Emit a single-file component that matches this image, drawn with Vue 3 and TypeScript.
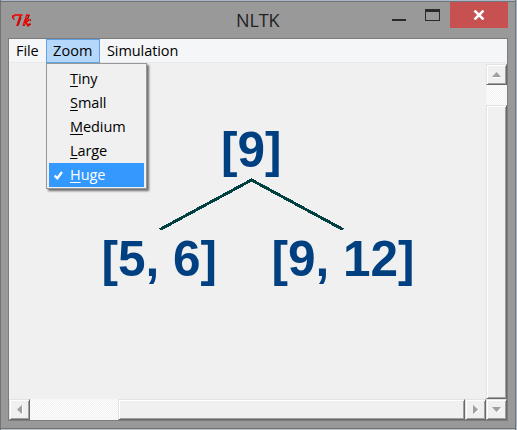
<script setup lang="ts">
import { ref } from 'vue'

const menus: string[] = ['File', 'Zoom', 'Simulation']
const sizes: string[] = ['Tiny', 'Small', 'Medium', 'Large', 'Huge']
const open = ref('Zoom')
const selected = ref('Huge')
</script>

<template>
  <div class="window">
    <header class="titlebar">
      <svg class="tk" width="20" height="14" viewBox="0 0 20 14" fill="none" stroke="#f00000">
        <path d="M.8 4.500 V2 H2 L3 1 H10.500" stroke-width="1.700" />
        <path d="M8.500 1.500 L5 12" stroke-width="1.800" />
        <path d="M9.300 3 L6.200 11.500 M1 5 H3" stroke="#800" stroke-width=".8" />
        <path d="M14.500 1.500 L11 12 M14 1 H16.500 L16 4 L12 8" stroke-width="1.300" />
        <path d="M12.500 9 L17.500 5.500 M13.800 8.500 L16 11.500 L18.500 9.500" stroke-width="1.900" />
        <path d="M17.500 1 L15.500 5 M18.500 5 V7 M18.500 10 L16 12.500 M12.200 12 L13 10" stroke="#800" stroke-width=".8" />
      </svg>
      <span class="title">NLTK</span>
      <div class="controls">
        <span class="min"></span>
        <span class="max"></span>
        <button class="close" aria-label="Close">
          <svg width="12" height="10" viewBox="0 0 12 10"><path d="M1.500 .5 L10.500 9.500 M10.500 .5 L1.500 9.500" stroke="#fff" stroke-width="2.500" /></svg>
        </button>
      </div>
    </header>
    <main class="client">
      <nav class="menubar">
        <div v-for="m in menus" :key="m" class="menu" :class="{ active: m === open }" @click="open = m">
          <span>{{ m }}</span>
        </div>
      </nav>
      <div class="view">
        <svg class="tree" width="477" height="335" viewBox="9 64 477 335">
          <path d="M160 229.500 L251.500 180 L343 229.500" fill="none" stroke="#004040" stroke-width="3" shape-rendering="crispEdges" />
          <g text-anchor="middle">
            <text x="251.200" y="167">[9]</text>
            <text x="159.200" y="276">[5, 6]</text>
            <text x="343" y="276">[9, 12]</text>
          </g>
        </svg>
        <div class="vbar">
          <span class="btn"><svg width="10" height="6" viewBox="0 0 10 6"><path d="M1 5.500 H10" stroke="#fff" fill="none" /><path d="M0 5 L4.500 0 L9 5Z" /></svg></span>
          <span class="track-y"></span>
          <span class="thumb"></span>
        </div>
        <div class="hbar">
          <span class="btn"><svg width="6" height="10" viewBox="0 0 6 10"><path d="M5.500 1 V10" stroke="#fff" /><path d="M5 0 L0 4.500 L5 9Z" /></svg></span>
          <span class="track-x"></span>
          <span class="thumb"></span>
          <span class="btn"><svg width="6" height="10" viewBox="0 0 6 10"><path d="M1 10 L6 5" stroke="#fff" /><path d="M0 0 L5 4.500 L0 9Z" /></svg></span>
        </div>
        <span class="btn"><svg width="10" height="6" viewBox="0 0 10 6"><path d="M5 6 L10 1" stroke="#fff" /><path d="M0 0 L4.500 5 L9 0Z" /></svg></span>
      </div>
    </main>
    <div v-if="open === 'Zoom'" class="dropdown">
      <div v-for="s in sizes" :key="s" class="item" :class="{ chosen: s === selected }" @click="selected = s">
        <span class="mark">
          <svg v-if="s === selected" width="9" height="9" viewBox="0 0 9 9"><path d="M.7 4.500 L3.300 7.300 L8 1" fill="none" stroke="#fff" stroke-width="2.300" /></svg>
        </span>
        <span class="label"><u>{{ s[0] }}</u>{{ s.slice(1) }}</span>
      </div>
    </div>
  </div>
</template>

<style>
body { background: #a9b9cb; }
</style>

<style scoped>
* { box-sizing: border-box; }
.window {
  position: relative;
  width: 516px;
  height: 430px;
  border: 1px solid #737373;
  border-top: 0;
  border-bottom: 0;
  background: linear-gradient(#a9b9cb 1px, #737373 1px 2px, #999 2px 428px, #737373 428px 429px, #b9c3cc 429px);
  padding: 2px 7px 0;
  font-family: "Open Sans", "Noto Sans", sans-serif;
}
.titlebar {
  display: grid;
  grid-template-columns: 1fr auto 1fr;
  height: 36px;
}
.tk { margin: 12px 0 0 4px; }
.title {
  width: 44px;
  font-size: 18px;
  line-height: 36px;
  letter-spacing: -0.1px;
  color: #222;
  white-space: nowrap;
}
.controls { display: flex; justify-content: flex-end; }
.min { width: 14px; height: 2px; background: #2a2a2a; margin: 17px 19px 0 0; }
.max { width: 15px; height: 12px; border: 1px solid #2a2a2a; border-top-width: 3px; margin: 7px 10px 0 0; }
.close {
  width: 58px;
  height: 26px;
  border: 0;
  padding: 0 1px 1px 0;
  background: #c75050;
  display: flex;
  align-items: center;
  justify-content: center;
}
.client {
  width: 500px;
  height: 383px;
  border: 1px solid #7c7c7c;
  background: #f0f0f0;
}
.menubar {
  display: flex;
  height: 24px;
  background: #f5f6f7;
  border-bottom: 1px solid #e8e9ec;
}
.menu {
  height: 24px;
  padding: 0 7px;
  line-height: 24px;
  font-size: 14.500px;
  letter-spacing: -0.08px;
  color: #000;
}
.menu:first-child { width: 37px; }
.menu.active { width: 54px; padding: 0 6px; line-height: 22px; letter-spacing: .1px; background: #b5d7f9; border: 1px solid #62a3e5; }
.menu span { display: inline-block; white-space: nowrap; }
.view {
  display: grid;
  grid-template: 336px 21px / 477px 21px;
}
.tree { display: block; margin-top: 1px; }
.tree text { font: bold 49.500px "Liberation Sans", sans-serif; fill: #004080; }
.vbar { display: flex; flex-direction: column; padding-top: 1px; }
.hbar { display: flex; }
.track-x, .track-y {
  flex: none;
  background: repeating-conic-gradient(#fff 0 25%, #f0f0f0 0 50%) 0 0 / 2px 2px;
}
.track-x { width: 88px; }
.track-y { height: 20px; }
.btn, .thumb {
  background: #f0f0f0;
  border: 1px solid;
  border-color: #e3e3e3 #696969 #696969 #e3e3e3;
  box-shadow: inset 1px 1px #fff, inset -1px -1px #a0a0a0;
}
.btn {
  flex: none;
  width: 21px;
  height: 21px;
  display: flex;
  align-items: center;
  justify-content: center;
  fill: #a0a0a0;
}
.thumb { flex: 1; }
.dropdown {
  position: absolute;
  left: 45px;
  top: 63px;
  width: 101px;
  height: 126px;
  padding: 3px 2px 2px;
  background: #f0f0f0;
  border: 1px solid #979797;
  box-shadow: 2px 2px 2px rgba(0, 0, 0, .55);
}
.item { display: flex; height: 24px; align-items: center; font-size: 14.500px; line-height: 24px; letter-spacing: -0.08px; color: #000; }
.item.chosen { color: #fff; background: #3399ff; }
.mark { width: 21px; height: 24px; display: flex; align-items: center; padding-left: 5px; }
.label u { text-decoration-thickness: 1px; text-underline-offset: 2px; }
</style>
